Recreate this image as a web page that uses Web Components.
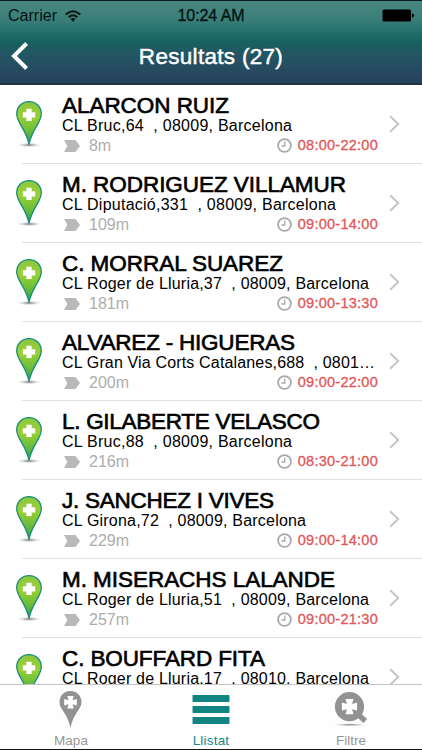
<!DOCTYPE html>
<html lang="ca">
<head>
<meta charset="utf-8">
<title>Resultats</title>
<style>
html,body{margin:0;height:100%;overflow:hidden;background:#fff}
body{font-family:"Liberation Sans",Arial,sans-serif}
</style>
</head>
<body>
<results-app></results-app>
<script>
const define = (name, html, setup) => {
  const t = document.createElement('template');
  t.innerHTML = html;
  customElements.define(name, class extends HTMLElement {
    connectedCallback() {
      if (this.shadowRoot) return;
      this.attachShadow({mode: 'open'}).appendChild(t.content.cloneNode(true));
      if (setup) setup(this, this.shadowRoot);
    }
  });
};

// A single line of text whose tracking is adjusted to fill the given width.
define('fit-text', `<style>:host{display:block;white-space:pre;width:max-content}span{display:inline-block}</style><span></span>`, (el, root) => {
  const s = root.querySelector('span'), w = +el.getAttribute('width');
  s.textContent = el.getAttribute('text');
  const natural = s.getBoundingClientRect().width;
  s.style.letterSpacing = ((w - natural) / Math.max(1, s.textContent.length - 1)) + 'px';
});

define('status-bar', `
<style>
:host{display:flex;align-items:center;height:28px;padding:1px 8px 0;box-sizing:border-box;color:#051412;font-size:16px}
.l,.r{flex:1;display:flex;align-items:center}.l{gap:8px}.r{justify-content:flex-end}
.t{-webkit-text-stroke:.35px #051412}
svg{display:block}
</style>
<div class="l"><fit-text text="Carrier" width="49"></fit-text>
<svg width="16" height="12" viewBox="0 0 16 12"><g fill="none" stroke="#051412" stroke-width="2"><path d="M.8 4.6Q8-2.2 15.2 4.6"/><path d="M3.7 7.3Q8 3.3 12.3 7.3"/></g><path d="M5.5 9.1Q8 7.1 10.5 9.1L8 11.8Z" fill="#051412"/></svg></div>
<div class="t"><fit-text text="10:24 AM" width="67"></fit-text></div>
<div class="r"><svg width="32" height="13" viewBox="0 0 32 13"><rect x=".5" y=".5" width="28.5" height="12" rx="1.6" fill="#000"/><path d="M30 4.2Q32 4.7 32 6.5T30 8.8Z" fill="#000"/></svg></div>`);

define('nav-header', `
<style>
:host{display:block;height:85px;box-sizing:border-box;border-top:1px solid #0b1b22;border-bottom:2px solid #24333f;background:linear-gradient(#4a8780 0,#3b7f79 22%,#1c6c68 42%,#18615f 50%,#245463 68%,#27425d 100%)}
.bar{display:grid;grid-template-columns:80px 1fr 80px;align-items:center;height:54px}
.bar svg{margin-left:11px;display:block}
fit-text{justify-self:center;margin-top:2px;color:#fff;font-size:22.5px;line-height:26px;-webkit-text-stroke:.5px #fff;text-shadow:0 -1px 1px #0e3540aa}
</style>
<status-bar></status-bar>
<div class="bar"><svg width="18" height="28" viewBox="0 0 18 28"><path d="M15.6 1.5L3 14l12.6 12.5" fill="none" stroke="#fff" stroke-width="4"/></svg><fit-text text="Resultats (27)" width="144"></fit-text></div>`);

define('pharmacy-pin', `
<style>:host{display:block}svg{display:block}</style>
<svg width="30" height="49" viewBox="0 0 30 49"><defs>
<linearGradient id="g" x1="0" y1="0" x2="0" y2="1"><stop offset="0" stop-color="#8cc63f"/><stop offset=".35" stop-color="#9ad034"/><stop offset=".7" stop-color="#66bb3c"/><stop offset="1" stop-color="#239a62"/></linearGradient>
<radialGradient id="s"><stop offset="0" stop-color="#555" stop-opacity=".85"/><stop offset=".5" stop-color="#888" stop-opacity=".4"/><stop offset="1" stop-color="#aaa" stop-opacity="0"/></radialGradient></defs>
<ellipse cx="15" cy="45" rx="12" ry="2.2" fill="url(#s)"/>
<path d="M15 1.7C7.5 1.7 2.7 7.2 2.7 14c0 8.500 9.500 15.500 12.300 30.500C17.800 29.500 27.300 22.500 27.300 14 27.300 7.200 22.500 1.700 15 1.700Z" fill="url(#g)" stroke="#168e7c" stroke-width="1.300"/>
<path d="M12.300 8.700h5.400v3.500h3.500v5.400h-3.500v3.500h-5.400v-3.500H8.800v-5.400h3.500Z" fill="#fff"/></svg>`);

define('result-row', `
<style>
:host{display:flex;height:79px;flex:none;color:#000;overflow:hidden}
pharmacy-pin{margin:15px 0 0 14px;width:30px;flex:none}
.body{width:318px;margin-left:18px;padding-top:8px;box-sizing:border-box;flex:none}
.name{font-size:22.500px;line-height:25px;height:24px;-webkit-text-stroke:.65px #000}
.addr{font-size:16px;line-height:17px;height:17px}
.meta{display:flex;align-items:center;height:18px;margin-top:2px;font-size:16px;color:#adadad}
.meta .tag{margin:1px 9px 0 2px}
.dist{margin-top:2px}
.hours{margin-left:auto;margin-right:2px;display:flex;align-items:center;gap:6px}
.hours fit-text{color:#df5758;font-size:14.500px;-webkit-text-stroke:.3px #df5758}
.next{margin:30px 0 0 9px;display:block;flex:none}
svg{display:block}
.wrap{display:flex;width:422px;height:79px;background:linear-gradient(#e0e0e0,#e0e0e0) 22px 78px/400px 1px no-repeat}
</style>
<div class="wrap"><pharmacy-pin></pharmacy-pin>
<div class="body"><div class="name"></div><div class="addr"></div>
<div class="meta"><svg class="tag" width="16" height="12" viewBox="0 0 16 12"><path d="M0 0H11.500L16 6 11.500 12H0L3.300 6Z" fill="#b9b9b9"/></svg><span class="dist"></span>
<div class="hours"><svg width="15" height="15" viewBox="0 0 15 15"><circle cx="7.500" cy="7.500" r="6.400" fill="none" stroke="#a9a9a9" stroke-width="1.800"/><path d="M7.800 3.500V8H4.500" fill="none" stroke="#a9a9a9" stroke-width="1.300"/></svg><span class="h"></span></div></div></div>
<svg class="next" width="12" height="18" viewBox="0 0 12 18"><path d="M1.200 1.200L9.200 9 1.200 16.800" fill="none" stroke="#c5c5c9" stroke-width="2"/></svg></div>`, (el, root) => {
  const put = (sel, text, width) => {
    const f = document.createElement('fit-text');
    f.setAttribute('text', text); f.setAttribute('width', width);
    root.querySelector(sel).appendChild(f);
  };
  const [name, nw, addr, aw, dist, dw, hours] = el.data;
  put('.name', name, nw); put('.addr', addr, aw);
  if (dist) { put('.dist', dist, dw); put('.h', hours, 80); }
  else root.querySelector('.meta').remove();
});

define('result-list', `<style>:host{display:flex;flex-direction:column;height:599px;overflow:hidden;background:#fff}</style>`, (el, root) => {
  [
    ['ALARCON RUIZ',167,'CL Bruc,64  , 08009, Barcelona',230,'8m',22,'08:00-22:00'],
    ['M. RODRIGUEZ VILLAMUR',284,'CL Diputació,331  , 08009, Barcelona',274,'109m',40,'09:00-14:00'],
    ['C. MORRAL SUAREZ',221,'CL Roger de Lluria,37  , 08009, Barcelona',307,'181m',40,'09:00-13:30'],
    ['ALVAREZ - HIGUERAS',233,'CL Gran Via Corts Catalanes,688  , 0801…',313,'200m',40,'09:00-22:00'],
    ['L. GILABERTE VELASCO',258,'CL Bruc,88  , 08009, Barcelona',230,'216m',40,'08:30-21:00'],
    ['J. SANCHEZ I VIVES',212,'CL Girona,72  , 08009, Barcelona',244,'229m',40,'09:00-14:00'],
    ['M. MISERACHS LALANDE',273,'CL Roger de Lluria,51  , 08009, Barcelona',307,'257m',40,'09:00-21:30'],
    ['C. BOUFFARD FITA',203,'CL Roger de Lluria,17  , 08010, Barcelona',307]
  ].forEach(d => { const r = document.createElement('result-row'); r.data = d; root.appendChild(r); });
});

define('tab-item', `
<style>:host{display:flex;flex-direction:column;align-items:center;width:140px;color:#969696;font-size:13.5px}
:host([active]){color:#168887}
.i{height:47px;display:flex;align-items:flex-start}fit-text{line-height:17px}</style>
<div class="i"><slot></slot></div><div class="t"></div>`, (el, root) => {
  const f = document.createElement('fit-text');
  f.setAttribute('text', el.getAttribute('label')); f.setAttribute('width', el.getAttribute('w'));
  root.querySelector('.t').appendChild(f);
});

define('tab-bar', `
<style>:host{display:flex;justify-content:center;height:66px;box-sizing:border-box;border-top:1px solid #c4c4c4;border-bottom:1px solid #151515;background:#fefefe}svg{display:block}</style>
<tab-item label="Mapa" w="34"><svg width="24" height="46" viewBox="0 0 24 46"><path d="M11.500 6C5 6 .5 10.900 .5 17c0 7.500 8.500 11.500 11 26.500C14 28.500 22.500 24.500 22.500 17 22.500 10.900 18 6 11.500 6Z" fill="#929292"/><path d="M8.300 11h6.400l-1.200 4.200 4.300-1.200v6.400l-4.300-1.200 1.200 4.200H8.300l1.200-4.200-4.300 1.200V14l4.300 1.200Z" fill="#fff"/></svg></tab-item>
<tab-item label="Llistat" w="36.500" active><svg width="38" height="46" viewBox="0 0 38 46"><g fill="#128583"><rect x=".5" y="10" width="37" height="7" rx=".8"/><rect x=".5" y="21" width="37" height="7" rx=".8"/><rect x=".5" y="32" width="37" height="7" rx=".8"/></g></svg></tab-item>
<tab-item label="Filtre" w="30"><svg width="36" height="46" viewBox="0 0 36 46"><defs><radialGradient id="f"><stop offset="0" stop-color="#555" stop-opacity=".8"/><stop offset="1" stop-color="#aaa" stop-opacity="0"/></radialGradient></defs><ellipse cx="17" cy="39.800" rx="17" ry="1.500" fill="url(#f)"/><path d="M25 29.500l7.300 6.500" stroke="#929292" stroke-width="5.500"/><circle cx="16.500" cy="21.700" r="14.600" fill="#929292"/><path d="M12.500 14h8l-1.400 5 5-1.400v8l-5-1.400 1.400 5h-8l1.400-5-5 1.400v-8l5 1.400Z" fill="#fff"/></svg></tab-item>`);

define('results-app', `<style>:host{display:flex;flex-direction:column;width:422px;height:750px;overflow:hidden}</style><nav-header></nav-header><result-list></result-list><tab-bar></tab-bar>`);
</script>
</body>
</html>
